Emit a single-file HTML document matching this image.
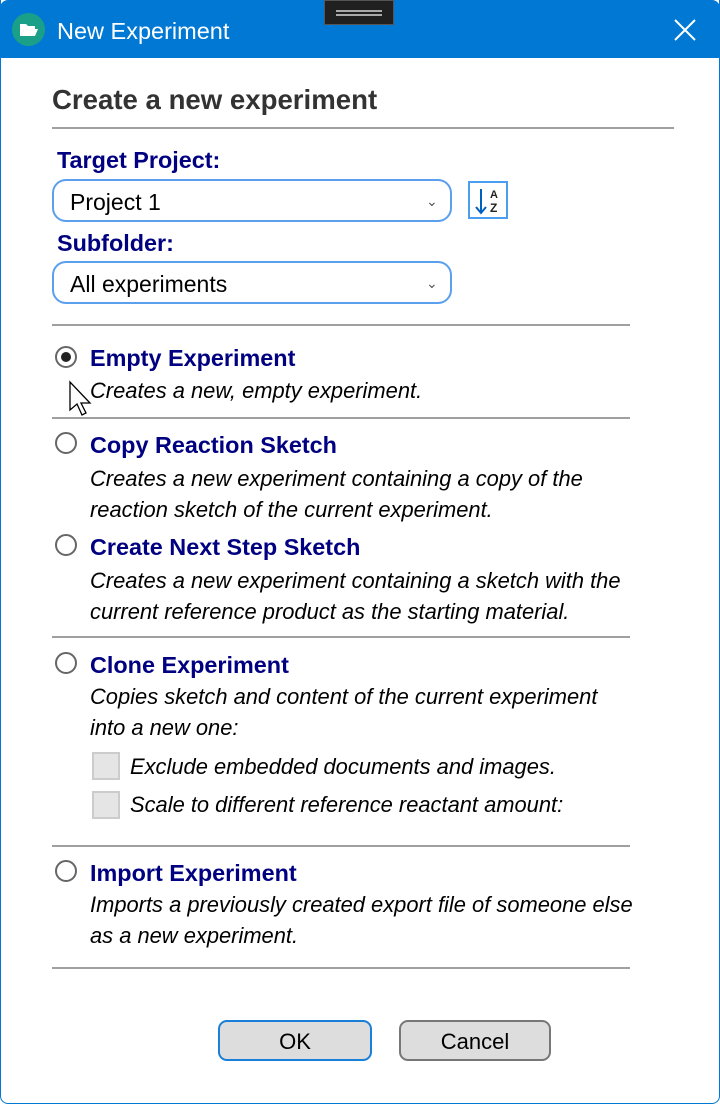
<!DOCTYPE html>
<html><head><meta charset="utf-8"><style>
*{margin:0;padding:0;box-sizing:border-box}
body{width:720px;height:1104px;background:#fff;font-family:"Liberation Sans",sans-serif;position:relative;overflow:hidden}
.win{position:absolute;left:0;top:0;width:720px;height:1104px;border:1px solid #0078d4;border-top:none;border-radius:0 0 8px 8px}
.title{position:absolute;left:0;top:0;width:720px;height:58px;background:#0078d4;border-radius:8px 8px 0 0}
.t{position:absolute;white-space:nowrap;height:30px;line-height:30px}
.hr{position:absolute;height:2px;background:#a0a0a0}
.lbl{font-weight:bold;color:#000080;font-size:23.4px}
.desc{font-style:italic;font-size:21.9px;color:#000}
.radio{position:absolute;left:55px;width:22px;height:22px;border:2px solid #666;border-radius:50%;background:#fff}
.sel{position:absolute;border:2px solid #5aa0ee;border-radius:14px;background:#fff}
.cb{position:absolute;left:92px;width:28px;height:28px;background:#e5e5e5;border:2px solid #ccc}
.btn{position:absolute;top:1020px;height:41px;border-radius:9px;background:#ddd;font-size:22px;text-align:center;line-height:39px}
</style></head><body>
<div class="win"></div>
<div class="title"></div>
<div style="position:absolute;left:324px;top:0;width:70px;height:25px;background:#202020;border:1px solid #555"></div>
<div style="position:absolute;left:336px;top:10px;width:46px;height:2px;background:#aaa"></div>
<div style="position:absolute;left:336px;top:14px;width:46px;height:2px;background:#aaa"></div>
<div style="position:absolute;left:12px;top:13px;width:33px;height:33px;border-radius:50%;background:#1aa088"></div>
<svg style="position:absolute;left:19px;top:21px" width="20" height="17" viewBox="0 0 20 17"><path d="M1 3h6l2 2h7v3H5L2 15H1z" fill="#fff"/><path d="M5 8h14l-3 7H2z" fill="#fff"/></svg>
<div class="t" style="left:57px;top:16px;color:#fff;font-size:23.5px">New Experiment</div>
<svg style="position:absolute;left:674px;top:19px" width="22" height="22"><path d="M1 1L21 21M21 1L1 21" stroke="#fff" stroke-width="2"/></svg>

<div class="t" style="left:52px;top:85px;font-size:27.6px;font-weight:bold;color:#333">Create a new experiment</div>
<div class="hr" style="left:52px;top:127px;width:622px"></div>

<div class="t lbl" style="left:57px;top:145px">Target Project:</div>
<div class="sel" style="left:52px;top:179px;width:400px;height:43px"></div>
<div class="t" style="left:70px;top:187px;font-size:23px">Project 1</div>
<div class="t" style="left:426px;top:186px;font-size:14px;color:#555">&#8964;</div>
<div style="position:absolute;left:468px;top:181px;width:40px;height:38px;border:2px solid #4a9ff0"></div>
<svg style="position:absolute;left:472px;top:186px" width="32" height="30"><path d="M9 3V26M4 21l5 6 5-6" stroke="#0060c0" stroke-width="2" fill="none"/><text x="18" y="12" font-family="Liberation Sans" font-size="11" font-weight="bold" fill="#222">A</text><text x="18" y="26" font-family="Liberation Sans" font-size="12" font-weight="bold" fill="#222">Z</text></svg>

<div class="t lbl" style="left:57px;top:228px">Subfolder:</div>
<div class="sel" style="left:52px;top:261px;width:400px;height:43px"></div>
<div class="t" style="left:70px;top:269px;font-size:23px">All experiments</div>
<div class="t" style="left:426px;top:268px;font-size:14px;color:#555">&#8964;</div>

<div class="hr" style="left:52px;top:324px;width:578px"></div>

<div class="radio" style="top:346px"></div>
<div style="position:absolute;left:61px;top:352px;width:10px;height:10px;border-radius:50%;background:#222"></div>
<div class="t lbl" style="left:90px;top:343px">Empty Experiment</div>
<div class="t desc" style="left:90px;top:376px">Creates a new, empty experiment.</div>
<svg style="position:absolute;left:68px;top:380px" width="28" height="40"><path d="M2 2V30L9 24L14 35L18 33L13 23H22Z" fill="#fff" stroke="#000" stroke-width="1.3"/></svg>
<div class="hr" style="left:52px;top:417px;width:578px"></div>

<div class="radio" style="top:432px"></div>
<div class="t lbl" style="left:90px;top:430px">Copy Reaction Sketch</div>
<div class="t desc" style="left:90px;top:464px">Creates a new experiment containing a copy of the</div>
<div class="t desc" style="left:90px;top:495px">reaction sketch of the current experiment.</div>

<div class="radio" style="top:534px"></div>
<div class="t lbl" style="left:90px;top:532px">Create Next Step Sketch</div>
<div class="t desc" style="left:90px;top:566px">Creates a new experiment containing a sketch with the</div>
<div class="t desc" style="left:90px;top:597px">current reference product as the starting material.</div>
<div class="hr" style="left:52px;top:636px;width:578px"></div>

<div class="radio" style="top:652px"></div>
<div class="t lbl" style="left:90px;top:650px">Clone Experiment</div>
<div class="t desc" style="left:90px;top:682px">Copies sketch and content of the current experiment</div>
<div class="t desc" style="left:90px;top:713px">into a new one:</div>
<div class="cb" style="top:752px"></div>
<div class="t desc" style="left:130px;top:752px">Exclude embedded documents and images.</div>
<div class="cb" style="top:791px"></div>
<div class="t desc" style="left:130px;top:790px">Scale to different reference reactant amount:</div>
<div class="hr" style="left:52px;top:845px;width:578px"></div>

<div class="radio" style="top:860px"></div>
<div class="t lbl" style="left:90px;top:858px">Import Experiment</div>
<div class="t desc" style="left:90px;top:890px">Imports a previously created export file of someone else</div>
<div class="t desc" style="left:90px;top:921px">as a new experiment.</div>
<div class="hr" style="left:52px;top:967px;width:578px"></div>

<div class="btn" style="left:218px;width:154px;border:2px solid #1a7fd8">OK</div>
<div class="btn" style="left:399px;width:152px;border:2px solid #777">Cancel</div>
</body></html>
